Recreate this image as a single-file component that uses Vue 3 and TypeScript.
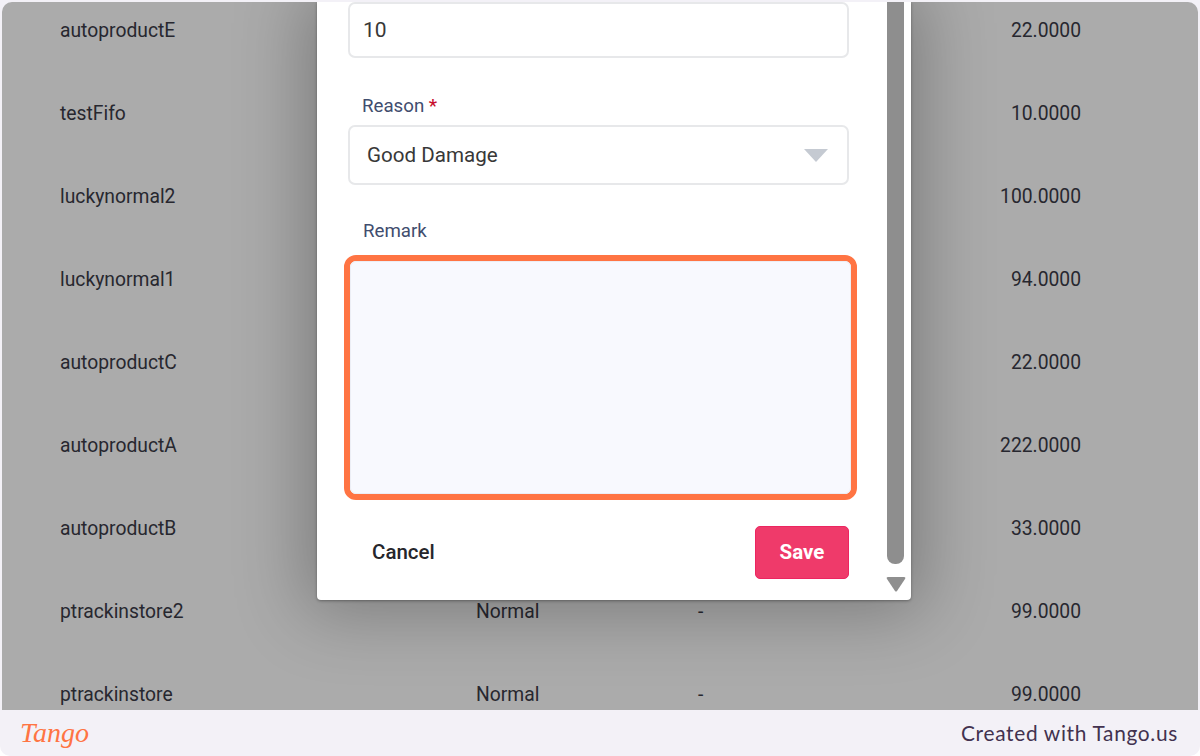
<script setup lang="ts">
interface Row {
  name: string
  type: string
  batch: string
  qty: string
}

const rows: Row[] = [
  { name: 'autoproductE', type: 'Normal', batch: '-', qty: '22.0000' },
  { name: 'testFifo', type: 'Normal', batch: '-', qty: '10.0000' },
  { name: 'luckynormal2', type: 'Normal', batch: '-', qty: '100.0000' },
  { name: 'luckynormal1', type: 'Normal', batch: '-', qty: '94.0000' },
  { name: 'autoproductC', type: 'Normal', batch: '-', qty: '22.0000' },
  { name: 'autoproductA', type: 'Normal', batch: '-', qty: '222.0000' },
  { name: 'autoproductB', type: 'Normal', batch: '-', qty: '33.0000' },
  { name: 'ptrackinstore2', type: 'Normal', batch: '-', qty: '99.0000' },
  { name: 'ptrackinstore', type: 'Normal', batch: '-', qty: '99.0000' },
]
</script>

<template>
  <div class="page">
    <main class="viewport">
      <div class="rows">
        <div v-for="row in rows" :key="row.name" class="row">
          <span>{{ row.name }}</span>
          <span>{{ row.type }}</span>
          <span>{{ row.batch }}</span>
          <span class="qty">{{ row.qty }}</span>
        </div>
      </div>

      <section class="modal">
        <form class="form" @submit.prevent>
          <div class="input value-ten">10</div>

          <label class="label reason-label">Reason <b>*</b></label>
          <div class="input select">
            <span>Good Damage</span>
            <svg width="24" height="13" viewBox="0 0 24 13"><path d="M0 0H24L12 13Z" fill="#c5cad2" /></svg>
          </div>

          <label class="label remark-label">Remark</label>
          <div class="highlight"><div class="textarea"></div></div>

          <div class="actions">
            <button type="button" class="cancel">Cancel</button>
            <button type="submit" class="save">Save</button>
          </div>
        </form>

        <div class="scrollbar">
          <div class="thumb"></div>
          <svg width="20" height="15" viewBox="0 0 20 15"><path d="M2 0H18Q20 0 19 2L11 14Q10 15 9 14L1 2Q0 0 2 0Z" fill="#8f8f8f" /></svg>
        </div>
      </section>
    </main>

    <footer class="footer">
      <span class="logo">Tango</span>
      <span class="credit">Created with Tango.us</span>
    </footer>
  </div>
</template>

<style>
html,
body {
  margin: 0;
  background: #fff;
}
</style>

<style scoped>
.page {
  width: 1200px;
  height: 756px;
  display: flex;
  flex-direction: column;
  overflow: hidden;
  background: #f3f1f7;
  border-radius: 0 0 10px 10px;
  font-family: Roboto, "Liberation Sans", sans-serif;
}

.viewport {
  position: relative;
  flex: 1;
  min-height: 0;
  margin: 2px 2px 0;
  overflow: hidden;
  background: #ababab;
  border-radius: 10px 10px 0 0;
}

.rows {
  margin-top: -12.5px;
}

.row {
  display: grid;
  grid-template-columns: 416px 222px 1fr 120px;
  align-items: center;
  height: 83px;
  padding: 0 117px 0 58px;
  font-size: 19.3px;
  line-height: 22px;
  color: #27272f;
}

.qty {
  text-align: right;
}

.modal {
  position: absolute;
  left: 315px;
  top: 0;
  width: 594px;
  height: 598px;
  display: flex;
  justify-content: space-between;
  background: #fff;
  border-radius: 0 0 4px 4px;
  box-shadow: 0 0 70px 12px rgba(0, 0, 0, 0.28), 0 1px 3px rgba(0, 0, 0, 0.35);
}

.form {
  width: 501px;
  margin-left: 31px;
  display: flex;
  flex-direction: column;
}

.input {
  box-sizing: border-box;
  display: flex;
  align-items: center;
  border: 2px solid #e7e8ea;
  border-radius: 7px;
  background: #fff;
  font-size: 20.6px;
  color: #383838;
}

.value-ten {
  height: 56px;
  padding-left: 13px;
  font-size: 21px;
}

.label {
  display: block;
  font-size: 18.7px;
  line-height: 20px;
  color: #414d6e;
}

.label b {
  color: #c8102e;
  font-weight: 500;
}

.reason-label {
  margin: 38px 0 9px 14px;
}

.select {
  height: 60px;
  justify-content: space-between;
  padding: 0 19px 0 17px;
}

.remark-label {
  margin: 36px 0 14px 15px;
}

.highlight {
  box-sizing: border-box;
  width: 513px;
  height: 245px;
  margin-left: -4px;
  border: 6px solid #ff7443;
  border-radius: 12px;
}

.textarea {
  box-sizing: border-box;
  height: 100%;
  background: #f8f9fe;
  border: 1px solid #eceef5;
  border-radius: 6px;
}

.actions {
  display: flex;
  justify-content: space-between;
  align-items: center;
  margin-top: 26px;
}

.cancel,
.save {
  font-family: inherit;
  font-size: 20.5px;
  line-height: 22px;
  cursor: pointer;
}

.cancel {
  padding: 0 0 2px 24px;
  border: 0;
  background: none;
  color: #26262b;
  font-weight: 500;
}

.save {
  box-sizing: border-box;
  width: 94px;
  height: 53px;
  padding: 0 0 2px;
  border: 1px solid #ec2560;
  border-radius: 5px;
  background: #ef3a6a;
  color: #fff;
  font-weight: 700;
}

.scrollbar {
  width: 20px;
  margin-right: 5px;
  display: flex;
  flex-direction: column;
}

.thumb {
  width: 17px;
  height: 562px;
  margin-left: 1px;
  background: #8e8e8e;
  border-radius: 0 0 8px 8px;
}

.scrollbar svg {
  margin-top: 13px;
}

.footer {
  height: 46px;
  flex: none;
  display: flex;
  justify-content: space-between;
  align-items: center;
  padding: 0 22px 0 20px;
}

.logo {
  font-family: "Liberation Serif", serif;
  font-style: italic;
  font-size: 28px;
  color: #ff7443;
}

.credit {
  font-family: Lato, sans-serif;
  font-size: 20.9px;
  letter-spacing: 0.67px;
  padding-bottom: 2px;
  color: #42324f;
}
</style>
